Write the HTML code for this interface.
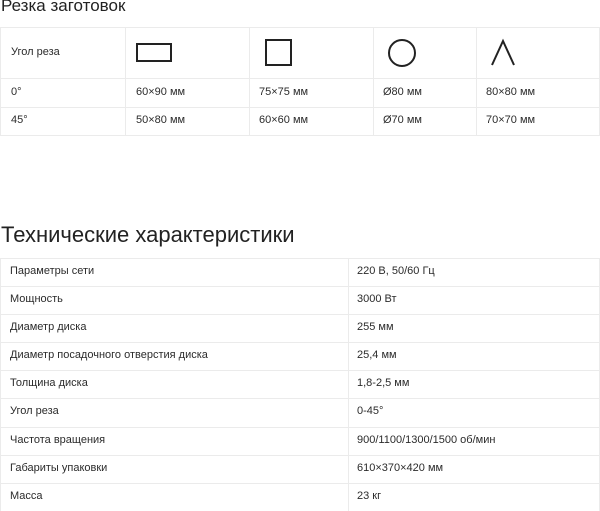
<!DOCTYPE html>
<html><head><meta charset="utf-8"><style>
*{margin:0;padding:0;box-sizing:border-box}
body{width:600px;height:511px;overflow:hidden;background:#fff;font-family:"Liberation Sans",sans-serif;color:#2b2b2b;position:relative}
.t{position:absolute;font-size:11px;white-space:nowrap}
.h{position:absolute;background:#ebebeb;height:1px}
.v{position:absolute;background:#ebebeb;width:1px}
</style></head><body>
<div class="t" style="left:1px;top:-4px;font-size:17px;color:#222">Резка заготовок</div>
<div class="h" style="left:0;width:600px;top:27px"></div>
<div class="h" style="left:0;width:600px;top:78px"></div>
<div class="h" style="left:0;width:600px;top:107px"></div>
<div class="h" style="left:0;width:600px;top:135px"></div>
<div class="v" style="left:0;top:27px;height:108px"></div>
<div class="v" style="left:125px;top:27px;height:108px"></div>
<div class="v" style="left:249px;top:27px;height:108px"></div>
<div class="v" style="left:373px;top:27px;height:108px"></div>
<div class="v" style="left:476px;top:27px;height:108px"></div>
<div class="v" style="left:599px;top:27px;height:108px"></div>
<div class="t" style="left:11px;top:46px">Угол реза</div>
<div style="position:absolute;left:136px;top:43px;width:36px;height:19px;border:2px solid #222"></div>
<div style="position:absolute;left:265px;top:39px;width:27px;height:27px;border:2px solid #222"></div>
<div style="position:absolute;left:388px;top:39px;width:28px;height:28px;border:2px solid #222;border-radius:50%"></div>
<svg style="position:absolute;left:490px;top:38px" width="30" height="30"><path d="M2 27 L13 3 L24 27" fill="none" stroke="#222" stroke-width="2"/></svg>
<div class="t" style="left:11px;top:86px">0°</div>
<div class="t" style="left:136px;top:86px">60×90 мм</div>
<div class="t" style="left:259px;top:86px">75×75 мм</div>
<div class="t" style="left:383px;top:86px">Ø80 мм</div>
<div class="t" style="left:486px;top:86px">80×80 мм</div>
<div class="t" style="left:11px;top:114px">45°</div>
<div class="t" style="left:136px;top:114px">50×80 мм</div>
<div class="t" style="left:259px;top:114px">60×60 мм</div>
<div class="t" style="left:383px;top:114px">Ø70 мм</div>
<div class="t" style="left:486px;top:114px">70×70 мм</div>

<div class="t" style="left:1px;top:222px;font-size:22px;color:#222">Технические характеристики</div>
<div class="v" style="left:0;top:258px;height:253px"></div>
<div class="v" style="left:348px;top:258px;height:253px"></div>
<div class="v" style="left:599px;top:258px;height:253px"></div>
<div id="rows"></div>
<div class="h" style="left:0;width:600px;top:258px"></div>
<div class="h" style="left:0;width:600px;top:286px"></div>
<div class="h" style="left:0;width:600px;top:314px"></div>
<div class="h" style="left:0;width:600px;top:342px"></div>
<div class="h" style="left:0;width:600px;top:370px"></div>
<div class="h" style="left:0;width:600px;top:398px"></div>
<div class="h" style="left:0;width:600px;top:427px"></div>
<div class="h" style="left:0;width:600px;top:455px"></div>
<div class="h" style="left:0;width:600px;top:483px"></div>
<div class="t" style="left:10px;top:265px">Параметры сети</div><div class="t" style="left:357px;top:265px">220 В, 50/60 Гц</div>
<div class="t" style="left:10px;top:293px">Мощность</div><div class="t" style="left:357px;top:293px">3000 Вт</div>
<div class="t" style="left:10px;top:321px">Диаметр диска</div><div class="t" style="left:357px;top:321px">255 мм</div>
<div class="t" style="left:10px;top:349px">Диаметр посадочного отверстия диска</div><div class="t" style="left:357px;top:349px">25,4 мм</div>
<div class="t" style="left:10px;top:377px">Толщина диска</div><div class="t" style="left:357px;top:377px">1,8-2,5 мм</div>
<div class="t" style="left:10px;top:405px">Угол реза</div><div class="t" style="left:357px;top:405px">0-45°</div>
<div class="t" style="left:10px;top:434px">Частота вращения</div><div class="t" style="left:357px;top:434px">900/1100/1300/1500 об/мин</div>
<div class="t" style="left:10px;top:462px">Габариты упаковки</div><div class="t" style="left:357px;top:462px">610×370×420 мм</div>
<div class="t" style="left:10px;top:490px">Масса</div><div class="t" style="left:357px;top:490px">23 кг</div>
</body></html>
